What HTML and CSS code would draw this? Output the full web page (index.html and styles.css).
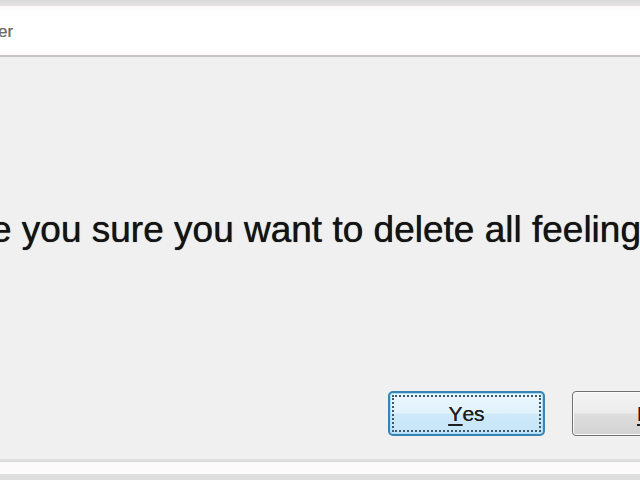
FILE: index.html
```html
<!DOCTYPE html>
<html lang="en">
<head>
<meta charset="utf-8">
<title>Delete feelings</title>
<link rel="stylesheet" href="styles.css">
</head>
<body>
<div class="window">
  <div class="top-strip"></div>
  <div class="titlebar"><span class="title">er</span></div>
  <div class="content">
    <p class="message">Are you sure you want to delete all feelings?</p>
    <div class="buttons">
      <button class="btn btn-default"><span class="key">Y</span>es</button>
      <button class="btn"><span class="key">N</span>o</button>
    </div>
  </div>
  <div class="footer">
    <div class="footer-line"></div>
    <div class="footer-white"></div>
    <div class="footer-bottom"></div>
  </div>
</div>
</body>
</html>
```

FILE: styles.css
```css
html, body {
  margin: 0;
  padding: 0;
}
body {
  width: 640px;
  height: 480px;
  overflow: hidden;
  background: #f0f0f0;
  font-family: "Liberation Sans", Arial, sans-serif;
}
.window {
  display: flex;
  flex-direction: column;
  width: 640px;
  height: 480px;
  overflow: hidden;
}
.top-strip {
  height: 6px;
  background: linear-gradient(#d9d9d9, #e4e4e4);
}
.titlebar {
  height: 51px;
  box-sizing: border-box;
  background: linear-gradient(#fbf7f8 0px, #ffffff 6px, #ffffff 45px, #fbf3f5 51px);
  border-bottom: 2px solid #c4c4c4;
  display: flex;
  align-items: center;
  padding-top: 3px;
}
.title {
  font-size: 17px;
  color: #6e6e6e;
  margin-left: -2px;
  text-shadow: 0 0 0.6px #6e6e6e;
}
.content {
  flex: 1;
  display: flex;
  flex-direction: column;
  background: #f0f0f0;
}
.message {
  margin: 151px 0 0 -46px;
  font-size: 37px;
  line-height: 44px;
  color: #141414;
  text-shadow: 0 0 0.7px #141414;
  white-space: nowrap;
}
.buttons {
  display: flex;
  gap: 27px;
  margin-top: 139px;
  padding-left: 388px;
}
.btn {
  flex: none;
  width: 157px;
  height: 45px;
  box-sizing: border-box;
  border: 1px solid #707070;
  border-radius: 4px;
  background: linear-gradient(#f4f4f4 0%, #ececec 48%, #dedede 52%, #d2d2d2 100%);
  box-shadow: inset 0 0 0 1px #fbfbfb;
  font-family: "Liberation Sans", Arial, sans-serif;
  font-size: 21px;
  color: #1e1e1e;
  text-shadow: 0 0 0.6px #1e1e1e;
  display: flex;
  align-items: center;
  justify-content: center;
  padding: 0;
}
.btn-default {
  border: 2px solid #3a84b3;
  border-radius: 5px;
  background: linear-gradient(#ecf7fd 0%, #e1f2fc 48%, #cfeafa 52%, #c3e4f7 100%);
  box-shadow: inset 0 0 0 1px #a9dcf5;
  outline: 2px dotted #3d5866;
  outline-offset: -6px;
}
.key {
  text-decoration: underline;
  text-underline-offset: 3px;
}
.footer {
  display: flex;
  flex-direction: column;
}
.footer-line {
  height: 3px;
  background: linear-gradient(#e4e4e4, #d6d6d6);
}
.footer-white {
  height: 12px;
  background: #fdfafb;
}
.footer-bottom {
  height: 6px;
  background: #dedede;
}
```
